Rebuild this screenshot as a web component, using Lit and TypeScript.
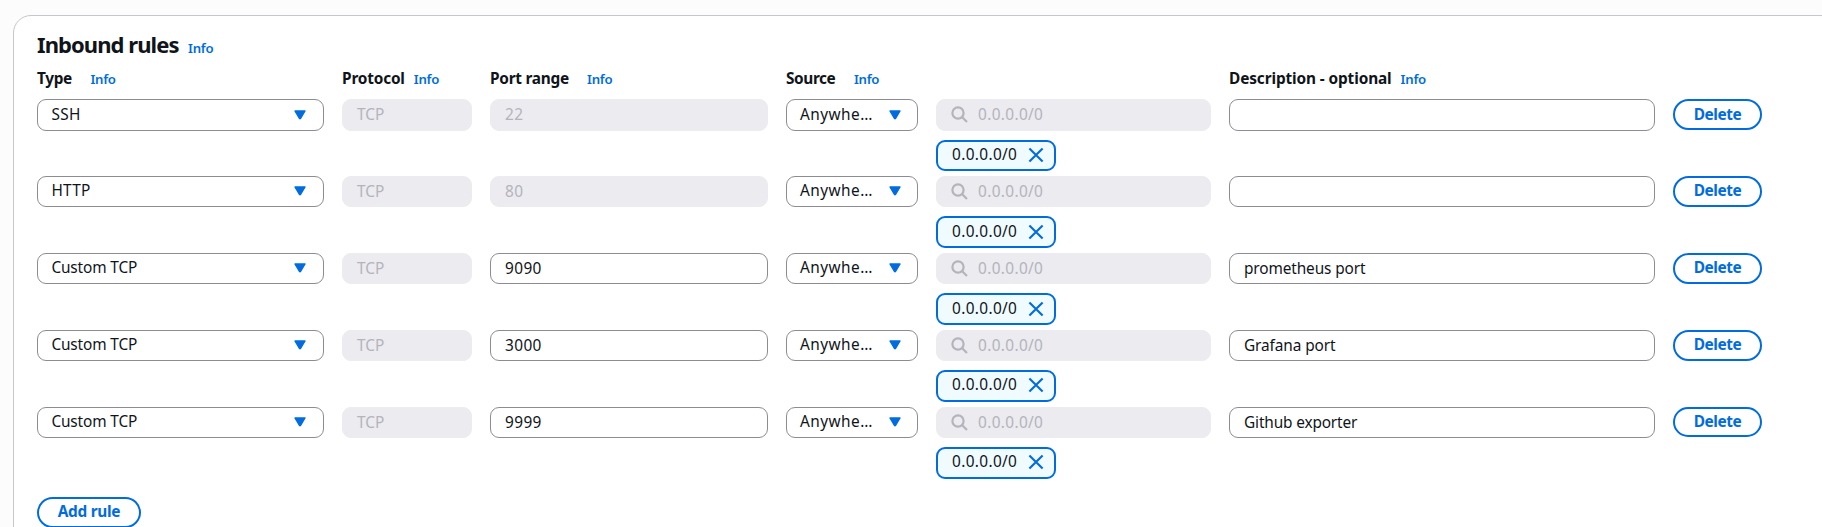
import { LitElement, html, css, svg } from "lit";
import { customElement } from "lit/decorators.js";
import { classMap } from "lit/directives/class-map.js";
import { styleMap } from "lit/directives/style-map.js";

interface Rule {
  type: string;
  port: string;
  editable: boolean;
  description: string;
}

const RULES: Rule[] = [
  { type: "SSH", port: "22", editable: false, description: "" },
  { type: "HTTP", port: "80", editable: false, description: "" },
  { type: "Custom TCP", port: "9090", editable: true, description: "prometheus port" },
  { type: "Custom TCP", port: "3000", editable: true, description: "Grafana port" },
  { type: "Custom TCP", port: "9999", editable: true, description: "Github exporter" },
];

// Label, distance between it and its Info link.
const COLUMNS: [string, number][] = [
  ["Type", 18.5],
  ["Protocol", 9],
  ["Port range", 18],
  ["Source", 18.5],
  ["", 0],
  ["Description - optional", 9],
];

// Letter spacing, in pixels, of each string.
const TRACKING: Record<string, number> = {
  "Inbound rules": -0.93,
  Info: -0.25,
  Type: -0.35,
  Protocol: -0.18,
  "Port range": -0.24,
  Source: -0.4,
  "Description - optional": -0.12,
  SSH: 0.4,
  HTTP: 0.3,
  "Custom TCP": -0.13,
  "Anywhe…": 0.45,
  "0.0.0.0/0": 0.35,
  "22": 0.5,
  "80": 0.5,
  "9090": 0.4,
  "3000": 0.4,
  "9999": 0.4,
  Delete: -0.45,
  "Add rule": -0.28,
  "prometheus port": -0.12,
  "Grafana port": -0.1,
  "Github exporter": -0.15,
};

const text = (value: string) =>
  html`<span style=${styleMap({ letterSpacing: `${TRACKING[value] ?? 0}px` })}>${value}</span>`;

const caret = html`<svg class="caret" width="12" height="10" viewBox="0 0 12 10">
  ${svg`<path d="M1 1h10L6.4 8.6a.5.5 0 0 1-.8 0z" fill="#006ce0" stroke="#006ce0" stroke-width="1.4" stroke-linejoin="round"/>`}
</svg>`;

const magnifier = html`<svg class="glyph" width="18" height="18" viewBox="0 0 18 18">
  ${svg`<path d="M11.2 11.2 16 16" /><circle cx="7" cy="7" r="5.6" />`}
</svg>`;

const cross = html`<svg class="cross" width="16" height="16" viewBox="0 0 16 16">
  ${svg`<path d="m1.4 1.4 13.2 13.2M14.6 1.4 1.4 14.6" />`}
</svg>`;

@customElement("app-root")
export class AppRoot extends LitElement {
  static styles = css`
    :host {
      display: block;
      box-sizing: border-box;
      height: 527px;
      overflow: hidden;
      padding: 15px 0 0 13px;
      background: #fcfcfd;
      color: #0f141a;
      font: 400 15.4px/22px "Noto Sans", "Open Sans", sans-serif;
    }
    * {
      box-sizing: border-box;
    }
    .panel {
      width: 1826px;
      height: 560px;
      padding: 17px 0 0 23px;
      border: 1px solid #c6c6cd;
      border-radius: 18px;
      background: #fff;
    }
    .title {
      display: flex;
      align-items: baseline;
      gap: 9.5px;
      height: 32px;
    }
    h2 {
      margin: 0;
      font-size: 22px;
      line-height: 22px;
      font-weight: 700;
    }
    .info {
      color: #006ce0;
      font-size: 13.2px;
      line-height: 20px;
      font-weight: 600;
    }
    .grid {
      display: grid;
      grid-template-columns: 287px 130px 278px 132px 275px 426px 89px;
      column-gap: 18px;
    }
    .head {
      height: 34.4px;
      padding-top: 3px;
    }
    .label {
      display: flex;
      align-items: baseline;
      font-weight: 700;
      white-space: nowrap;
    }
    .row {
      height: 76.8px;
      align-items: start;
    }
    .box {
      display: flex;
      align-items: center;
      height: 31.2px;
      padding: 0.8px 14px 0;
      border: 1px solid #8c8c94;
      border-radius: 9px;
      background: #fff;
      white-space: nowrap;
    }
    .box.off {
      border-color: #ebebf0;
      background: #ebebf0;
      color: #b4b4bb;
    }
    .select {
      justify-content: space-between;
      padding: 0 17px 0.8px 13.4px;
    }
    .select.narrow {
      padding-right: 16px;
      padding-left: 13px;
    }
    .caret {
      flex: none;
    }
    .glyph {
      flex: none;
      margin-right: 9px;
      fill: none;
      stroke: #b4b4bb;
      stroke-width: 2.2;
    }
    .token {
      display: flex;
      align-items: center;
      justify-content: space-between;
      width: 120px;
      height: 31.8px;
      margin-top: 9px;
      padding: 0 10.5px 1px 14px;
      border: 2px solid #006ce0;
      border-radius: 9px;
      background: #f0fbff;
    }
    .cross {
      flex: none;
      fill: none;
      stroke: #006ce0;
      stroke-width: 2.1;
    }
    .button {
      display: flex;
      align-items: center;
      justify-content: center;
      width: 89px;
      height: 30.8px;
      margin: 0;
      padding: 0 0 0.5px;
      border: 2px solid #006ce0;
      border-radius: 22px;
      background: #fff;
      color: #006ce0;
      font: inherit;
      font-weight: 700;
    }
    .add {
      width: 104px;
      margin-top: 13.4px;
    }
  `;

  private row(rule: Rule) {
    return html`<div class="grid row">
      <div class="box select">${text(rule.type)}${caret}</div>
      <div class="box off">${text("TCP")}</div>
      <div class=${classMap({ box: true, off: !rule.editable })}>${text(rule.port)}</div>
      <div class="box select narrow">${text("Anywhe…")}${caret}</div>
      <div>
        <div class="box off">${magnifier}${text("0.0.0.0/0")}</div>
        <div class="token">${text("0.0.0.0/0")}${cross}</div>
      </div>
      <div class="box">${text(rule.description)}</div>
      <button class="button">${text("Delete")}</button>
    </div>`;
  }

  render() {
    return html`<section class="panel">
      <div class="title">
        <h2>${text("Inbound rules")}</h2>
        <a class="info">${text("Info")}</a>
      </div>
      <div class="grid head">
        ${COLUMNS.map(
          ([label, gap]) => html`<div class="label" style=${styleMap({ gap: `${gap}px` })}>
            ${label ? html`${text(label)}<a class="info">${text("Info")}</a>` : ""}
          </div>`
        )}
      </div>
      ${RULES.map((rule) => this.row(rule))}
      <button class="button add">${text("Add rule")}</button>
    </section>`;
  }
}
